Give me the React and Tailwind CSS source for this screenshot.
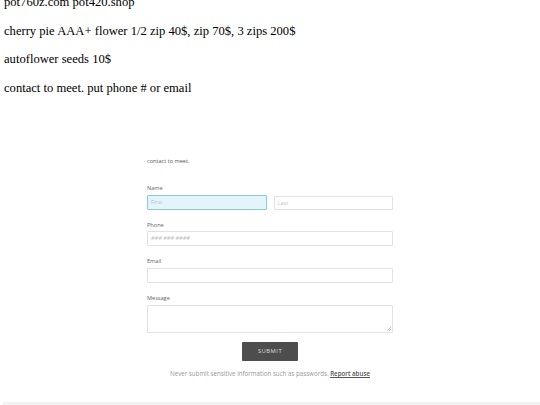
export default function App() {
  const serif = { fontFamily: '"Liberation Serif", "Times New Roman", serif' };
  const sans = { fontFamily: '"Open Sans", "Noto Sans", sans-serif' };
  return (
    <div className="w-[540px] h-[405px] overflow-hidden bg-white relative">
      <div className="h-[158px] flex flex-col pl-[4px] text-[12.6px] leading-[15px] text-black" style={serif}>
        <p className="mt-[-5px]">pot760z.com pot420.shop</p>
        <p className="mt-[13.5px]">cherry pie AAA+ flower 1/2 zip 40$, zip 70$, 3 zips 200$</p>
        <p className="mt-[13.5px]">autoflower seeds 10$</p>
        <p className="mt-[13.5px]">contact to meet. put phone # or email</p>
      </div>
      <div className="ml-[147px] w-[246px] flex flex-col" style={sans}>
        <div className="h-[7px] text-[5.6px] leading-[7px] text-[#555]">contact to meet.</div>
        <div className="mt-[19px] h-[8px] text-[5.6px] leading-[8px] text-[#666]">Name</div>
        <div className="mt-[3px] flex gap-[7px]">
          <div className="w-[120px] h-[15px] border border-[#8ccbdb] bg-[#e3f4fa] rounded-[1px] pl-[3px] text-[5.6px] leading-[13px] text-[#b5c4c8]">First</div>
          <div className="w-[120px] h-[14px] mt-[1px] border border-[#e2e2e2] bg-white rounded-[1px] pl-[3px] text-[5.6px] leading-[12px] text-[#c4c4c4]">Last</div>
        </div>
        <div className="mt-[11px] h-[8px] text-[5.6px] leading-[8px] text-[#666]">Phone</div>
        <div className="mt-[2px] h-[15px] border border-[#e2e2e2] rounded-[1px] pl-[3px] text-[5.6px] leading-[13px] text-[#bdbdbd] italic">### ### ####</div>
        <div className="mt-[11px] h-[8px] text-[5.6px] leading-[8px] text-[#666]">Email</div>
        <div className="mt-[3px] h-[15px] border border-[#e2e2e2] rounded-[1px]"></div>
        <div className="mt-[11px] h-[8px] text-[5.6px] leading-[8px] text-[#666]">Message</div>
        <div className="mt-[3px] h-[28px] border border-[#e2e2e2] rounded-[1px] relative">
          <svg className="absolute right-[1px] bottom-[1px]" width="4" height="4" viewBox="0 0 4 4">
            <path d="M4 0 L0 4 M4 2 L2 4" stroke="#999" strokeWidth="0.6" />
          </svg>
        </div>
        <div className="mt-[9px] self-center w-[56px] h-[19px] bg-[#4d4d4d] rounded-[1px] flex items-center justify-center text-[5.8px] tracking-[0.5px] text-[#ddd]">SUBMIT</div>
        <div className="mt-[9px] h-[8px] text-center text-[6.2px] leading-[8px] text-[#999] whitespace-nowrap">
          Never submit sensitive information such as passwords. <span className="text-[#555] font-semibold underline">Report abuse</span>
        </div>
      </div>
      <div className="absolute left-[3px] right-0 top-[402px] h-[3px] bg-[#f3f3f3]"></div>
    </div>
  );
}
